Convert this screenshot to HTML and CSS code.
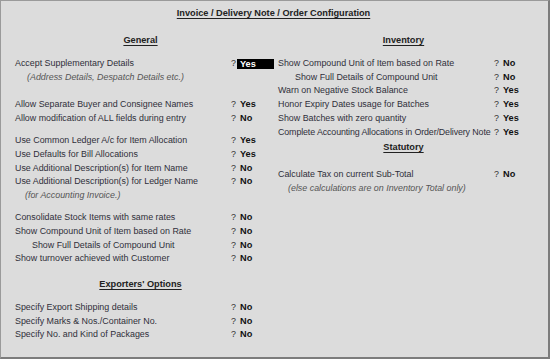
FILE: index.html
```html
<!doctype html>
<html>
	<head>
		<title>Invoice / Delivery Note / Order Configuration</title>
		<link rel="stylesheet" href="styles.css">
	</head>
	<body>
		<div class="window">
			<div class="title"><span>Invoice / Delivery Note / Order Configuration</span></div>

			<div class="columns">
				<div class="col">
					<div class="heading"><span>General</span></div>
					<div class="group first">
						<div class="row"><span class="label">Accept Supplementary Details</span><span class="q">?</span><span class="val active">Yes</span></div>
						<div class="note">(Address Details, Despatch Details etc.)</div>
					</div>
					<div class="group blank">
						<div class="row"><span class="label">Allow Separate Buyer and Consignee Names</span><span class="q">?</span><span class="val">Yes</span></div>
						<div class="row"><span class="label">Allow modification of ALL fields during entry</span><span class="q">?</span><span class="val">No</span></div>
					</div>
					<div class="group">
						<div class="row"><span class="label">Use Common Ledger A/c for Item Allocation</span><span class="q">?</span><span class="val">Yes</span></div>
						<div class="row"><span class="label">Use Defaults for Bill Allocations</span><span class="q">?</span><span class="val">Yes</span></div>
						<div class="row"><span class="label">Use Additional Description(s) for Item Name</span><span class="q">?</span><span class="val">No</span></div>
						<div class="row"><span class="label">Use Additional Description(s) for Ledger Name</span><span class="q">?</span><span class="val">No</span></div>
						<div class="note short">(for Accounting Invoice.)</div>
					</div>
					<div class="group">
						<div class="row"><span class="label">Consolidate Stock Items with same rates</span><span class="q">?</span><span class="val">No</span></div>
						<div class="row"><span class="label">Show Compound Unit of Item based on Rate</span><span class="q">?</span><span class="val">No</span></div>
						<div class="row"><span class="label sub">Show Full Details of Compound Unit</span><span class="q">?</span><span class="val">No</span></div>
						<div class="row"><span class="label">Show turnover achieved with Customer</span><span class="q">?</span><span class="val">No</span></div>
					</div>
					<div class="heading export"><span>Exporters' Options</span></div>
					<div class="group first">
						<div class="row"><span class="label">Specify Export Shipping details</span><span class="q">?</span><span class="val">No</span></div>
						<div class="row"><span class="label">Specify Marks &amp; Nos./Container No.</span><span class="q">?</span><span class="val">No</span></div>
						<div class="row"><span class="label">Specify No. and Kind of Packages</span><span class="q">?</span><span class="val">No</span></div>
					</div>
				</div>

				<div class="col">
					<div class="heading"><span>Inventory</span></div>
					<div class="group first">
						<div class="row"><span class="label">Show Compound Unit of Item based on Rate</span><span class="q">?</span><span class="val">No</span></div>
						<div class="row"><span class="label sub">Show Full Details of Compound Unit</span><span class="q">?</span><span class="val">No</span></div>
						<div class="row"><span class="label">Warn on Negative Stock Balance</span><span class="q">?</span><span class="val">Yes</span></div>
						<div class="row"><span class="label">Honor Expiry Dates usage for Batches</span><span class="q">?</span><span class="val">Yes</span></div>
						<div class="row"><span class="label">Show Batches with zero quantity</span><span class="q">?</span><span class="val">Yes</span></div>
						<div class="row"><span class="label tight">Complete Accounting Allocations in Order/Delivery Note</span><span class="q">?</span><span class="val">Yes</span></div>
					</div>
					<div class="heading statutory"><span>Statutory</span></div>
					<div class="group tax">
						<div class="row"><span class="label">Calculate Tax on current Sub-Total</span><span class="q">?</span><span class="val">No</span></div>
						<div class="note right">(else calculations are on Inventory Total only)</div>
					</div>
				</div>
			</div>
		</div>
	</body>
</html>
```

FILE: styles.css
```css
html, body {
	margin: 0;
	padding: 0;
	background: #dcdcdc;
}
body {
	font-family: "Liberation Sans", Arial, sans-serif;
	font-size: 8.9px;
	color: #2f2f3a;
}
.window {
	box-sizing: border-box;
	width: 550px;
	height: 359px;
	background: #dcdcdc;
	border-top: 1px solid #9a9a9a;
	border-left: 1px solid #9a9a9a;
	border-right: 2px solid #7c7c7c;
	border-bottom: 2px solid #7c7c7c;
	padding-top: 4.5px;
}
.title {
	text-align: center;
	line-height: 14px;
	font-weight: bold;
	font-size: 9.2px;
	color: #222;
	padding-right: 2px;
}
.title span, .heading span {
	text-decoration: underline;
	text-underline-offset: 2px;
}
.columns {
	display: grid;
	grid-template-columns: 263px 1fr;
	padding-left: 14px;
	margin-top: 14.5px;
}
.heading {
	width: 259px;
	box-sizing: border-box;
	padding-right: 8px;
	text-align: center;
	font-weight: bold;
	font-size: 9.2px;
	color: #222;
	line-height: 13.7px;
}
.heading.export {
	margin-top: 12px;
}
.heading.statutory {
	margin-top: 1.5px;
}
.group {
	margin-top: 8.5px;
}
.group.first {
	margin-top: 9.3px;
}
.group.blank {
	margin-top: 13.8px;
}
.group.tax {
	margin-top: 14px;
}
.row {
	display: grid;
	grid-template-columns: 214px 8px 37px;
	line-height: 13.7px;
	white-space: nowrap;
}
.label.sub {
	padding-left: 17px;
}
.label.tight {
	letter-spacing: -0.12px;
}
.q {
	padding-left: 2px;
	color: #333;
}
.val {
	font-weight: bold;
	font-size: 9.2px;
	color: #111;
	padding-left: 3px;
}
.val.active {
	background: #000;
	color: #fff;
	margin: 1.5px 0 1.5px 0;
	line-height: 10.7px;
}
.note {
	font-style: italic;
	color: #555;
	line-height: 13.7px;
	padding-left: 12px;
	white-space: nowrap;
}
.note.short {
	padding-left: 10px;
}
.note.right {
	padding-left: 10px;
}
```
